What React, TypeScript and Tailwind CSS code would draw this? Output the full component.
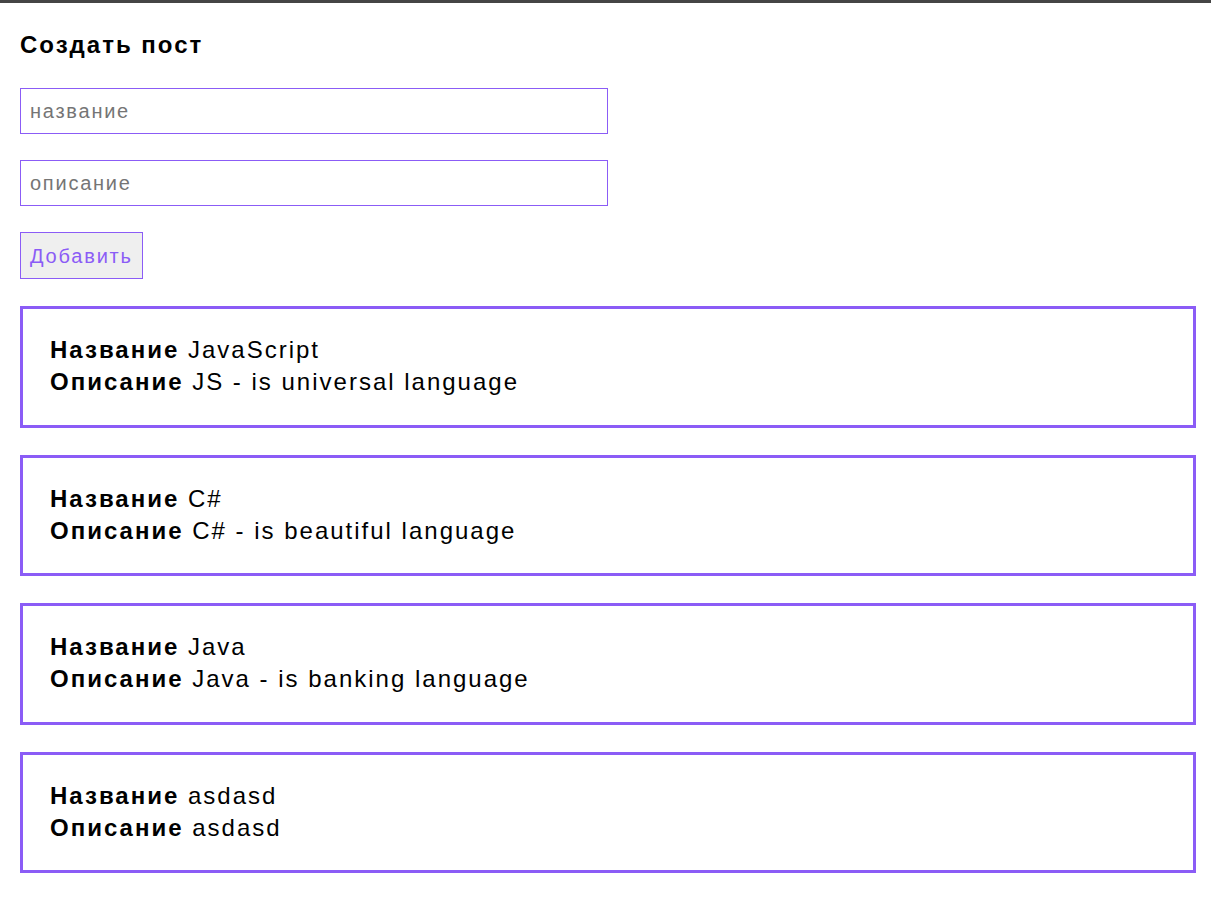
const posts = [
  { id: 1, title: 'JavaScript', body: 'JS - is universal language' },
  { id: 2, title: 'C#', body: 'C# - is beautiful language' },
  { id: 3, title: 'Java', body: 'Java - is banking language' },
  { id: 4, title: 'asdasd', body: 'asdasd' },
]

export default function App() {
  return (
    <div
      className="min-h-screen bg-white border-t-[3px] border-[#454545] pl-5 pr-[15px] pt-[26px] pb-8 text-black"
      style={{ fontFamily: '"Liberation Sans", Arial, sans-serif' }}
    >
      <h1 className="text-2xl leading-8 font-bold tracking-[2px]">Создать пост</h1>

      <form className="mt-[27px] flex flex-col items-start gap-[26px]" onSubmit={(e) => e.preventDefault()}>
        <input
          className="w-[588px] h-[46px] border border-[#8b5cf6] px-[9px] text-xl tracking-[1.75px] outline-none placeholder:text-[#757575]"
          placeholder="название"
        />
        <input
          className="w-[588px] h-[46px] border border-[#8b5cf6] px-[9px] text-xl tracking-[1.75px] outline-none placeholder:text-[#757575]"
          placeholder="описание"
        />
        <button className="h-[47px] border border-[#8b5cf6] bg-[#efefef] px-[9px] text-xl tracking-[1.8px] text-[#8b5cf6]">
          Добавить
        </button>
      </form>

      <div className="mt-[27px] flex flex-col gap-[27px]">
        {posts.map((post) => (
          <div
            key={post.id}
            className="border-[3px] border-[#8b5cf6] px-[27px] pt-[25px] pb-[26.5px] text-2xl leading-8 tracking-[2px]"
          >
            <div>
              <strong>Название</strong> {post.title}
            </div>
            <div>
              <strong>Описание</strong> {post.body}
            </div>
          </div>
        ))}
      </div>
    </div>
  )
}
